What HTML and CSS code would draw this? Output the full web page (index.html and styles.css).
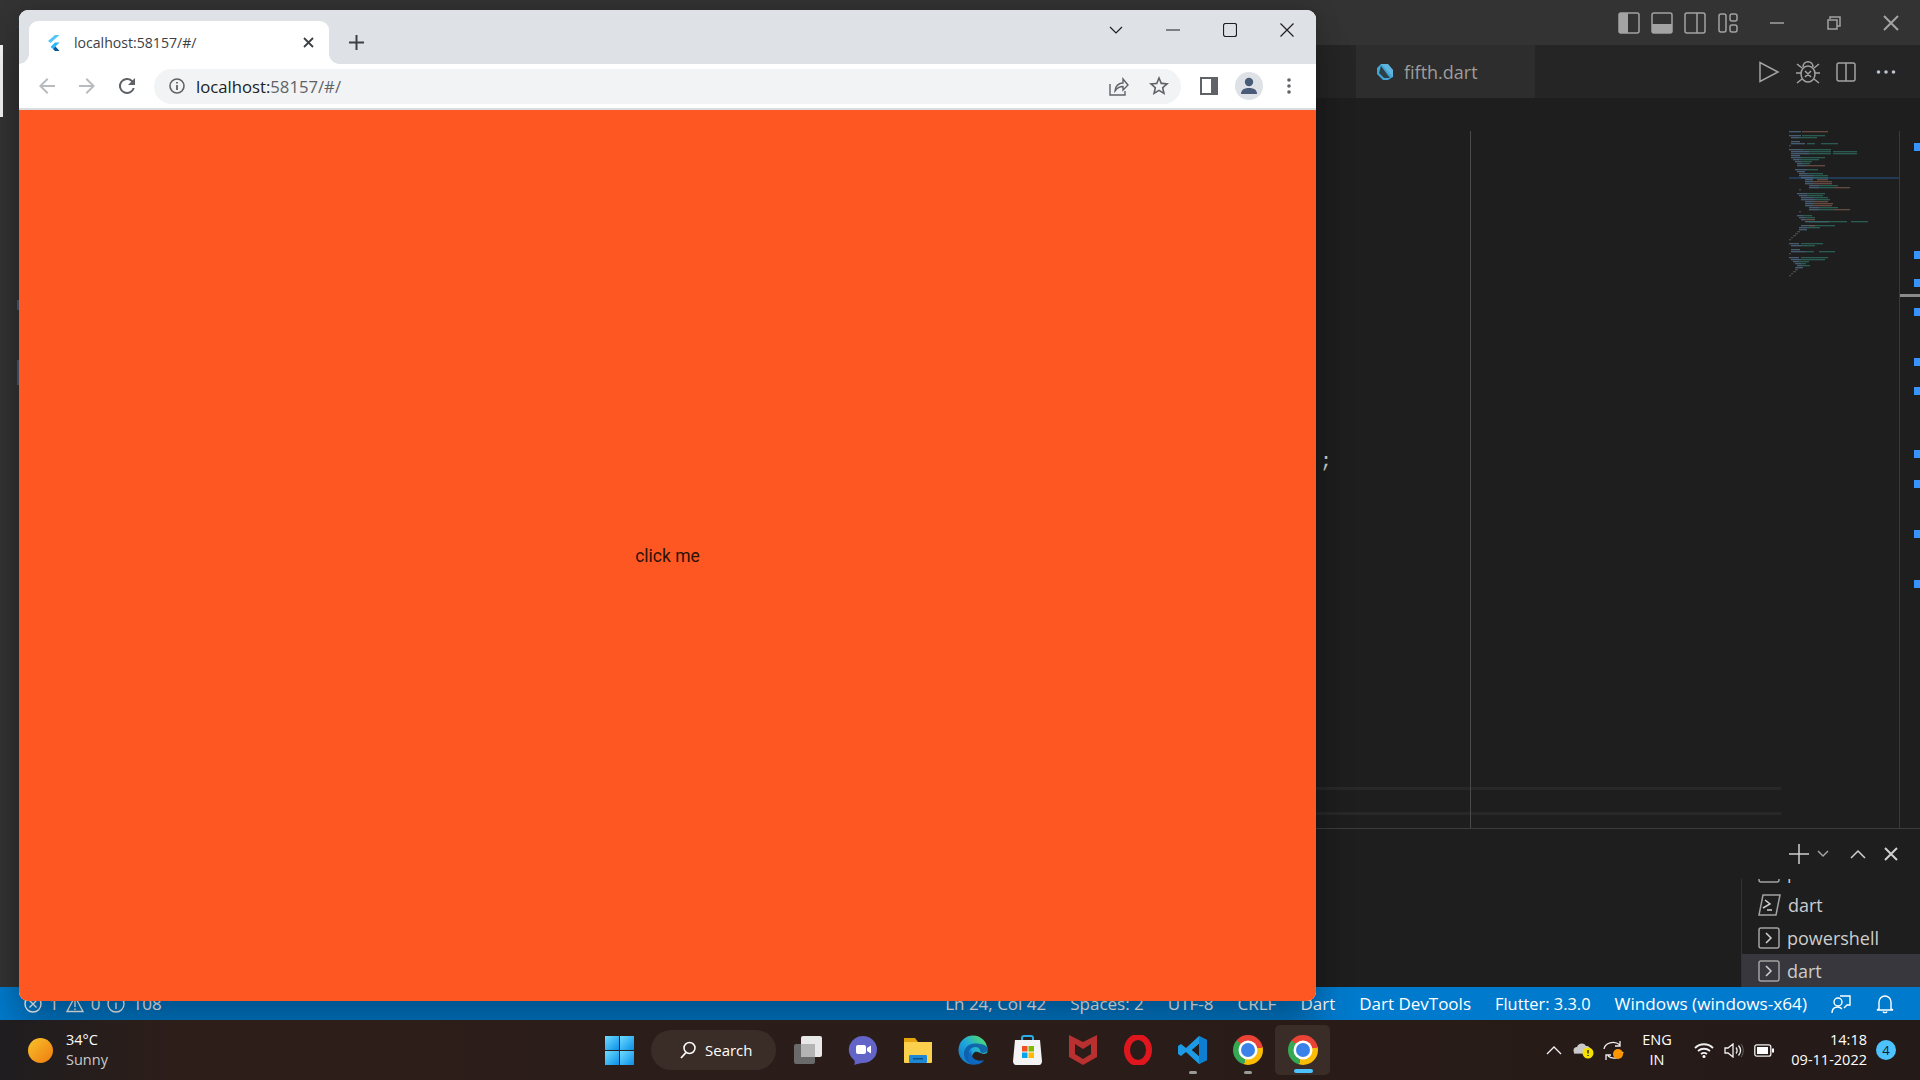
FILE: index.html
```html
<!DOCTYPE html>
<html>
<head>
    <title>localhost:58157/#/</title>
    <link rel="stylesheet" href="styles.css">
</head>
<body>
<div class="desktop">

    <!-- vs code behind the browser -->
    <div class="vscode">
        <div class="titlebar">
            <svg class="app-logo" width="20" height="14" viewBox="0 0 20 14"><path d="M15 0l5 3-5 3-5-3zM15 8l5 3-5 3-5-3z" fill="#1c78b8"/></svg>
            <svg class="ti" width="22" height="22" viewBox="0 0 22 22"><rect x="1" y="1" width="20" height="20" rx="2" class="line"/><rect x="1" y="1" width="9" height="20" class="fill"/></svg>
            <svg class="ti" width="22" height="22" viewBox="0 0 22 22"><rect x="1" y="1" width="20" height="20" rx="2" class="line"/><rect x="1" y="12" width="20" height="9" class="fill"/></svg>
            <svg class="ti" width="22" height="22" viewBox="0 0 22 22"><rect x="1" y="1" width="20" height="20" rx="2" class="line"/><path d="M13 1v20" class="line"/></svg>
            <svg class="ti" width="22" height="22" viewBox="0 0 22 22"><rect x="2" y="2" width="7" height="18" rx="2" class="line"/><rect x="13" y="2" width="7" height="7" rx="2" class="line"/><rect x="13" y="13" width="7" height="7" rx="2" class="line"/></svg>
            <div class="win-btns">
                <svg width="16" height="16" viewBox="0 0 16 16"><path d="M1 8h14" class="line"/></svg>
                <svg width="16" height="16" viewBox="0 0 16 16"><path d="M4 4V2h10v9h-3M2 5h9v9H2z" class="line"/></svg>
                <svg width="16" height="16" viewBox="0 0 16 16"><path d="M1 1l14 14M15 1L1 15" class="line thick"/></svg>
            </div>
        </div>

        <div class="workbench">
            <div class="activity">
                <div class="activity-active"></div>
                <div class="activity-bit activity-bit-a"></div>
                <div class="activity-bit activity-bit-b"></div>
            </div>

            <div class="main">
                <div class="tabbar">
                    <div class="file-tab">
                        <svg width="18" height="18" viewBox="0 0 18 18"><path d="M5 1h7l5 6v7l-5 3H7l-6-6V5z" fill="#40a6d8"/><path d="M5 1h7l5 6v7z" fill="#7fc4e6" opacity=".5"/><path d="M5 3l9 12H8L3 10z" fill="#2d2d2d" opacity=".85"/></svg>
                        <span>fifth.dart</span>
                    </div>
                    <div class="editor-actions">
                        <svg width="22" height="22" viewBox="0 0 22 22"><path d="M2 1.500v19L20 11z" class="line"/></svg>
                        <svg width="26" height="24" viewBox="0 0 26 24"><ellipse cx="13" cy="14" rx="7" ry="8" class="line"/><path d="M8 7c0-7 10-7 10 0M1 13h5M20 13h5M2 4l5 4M24 4l-5 4M2 23l5-4M24 23l-5-4M10 11l6 6M16 11l-6 6" class="line"/></svg>
                        <svg width="20" height="20" viewBox="0 0 20 20"><rect x="1" y="1" width="18" height="18" rx="2" class="line"/><path d="M10 1v18" class="line"/></svg>
                        <svg class="more-dots" width="20" height="6" viewBox="0 0 20 6"><circle cx="2.500" cy="3" r="1.800" fill="#b9c4cf"/><circle cx="10" cy="3" r="1.800" fill="#b9c4cf"/><circle cx="17.500" cy="3" r="1.800" fill="#b9c4cf"/></svg>
                    </div>
                </div>

                <div class="editor">
                    <div class="code">
                        <div class="code-guide"></div>
                        <div class="code-line">;</div>
                        <div class="code-rule code-rule-a"></div>
                        <div class="code-rule code-rule-b"></div>
                    </div>
                    <svg class="minimap" width="110" height="146" viewBox="0 0 110 146">
                        <rect x="0" y="46" width="110" height="2" fill="#223a55"/>
                        <path class="mm-blue" d="M0 .750h12M0 4.750h12M2 6.750h8M2 10.750h9M2 12.750h14M0 18.750h14M2 20.750h18M2 22.750h18M2 24.750h9M2 26.750h10M4 28.750h6M6 30.750h6M8 32.750h5M8 34.750h8M6 38.750h12M8 40.750h8M10 42.750h8M10 44.750h14M12 46.750h12M16 48.750h8M16 50.750h8M16 52.750h8M20 54.750h10M20 56.750h10M8 62.750h10M10 64.750h8M12 66.750h12M12 68.750h14M16 70.750h8M16 72.750h8M16 74.750h8M20 76.750h10M20 78.750h10M8 84.750h6M10 86.750h6M12 88.750h4M16 90.750h24M12 94.750h8M10 96.750h8M10 98.750h8M0 112.750h10M2 114.750h10M2 118.750h9M2 120.750h14M0 126.750h10M2 128.750h10M4 130.750h6M6 132.750h6M8 134.750h5M6 136.750h8"/>
                        <path class="mm-teal" d="M13 4.750h23M10 6.750h18M18 12.750h8M32 12.750h17M14 18.750h28M20 20.750h22M44 20.750h24M20 22.750h22M44 22.750h24M12 26.750h24M10 28.750h20M12 30.750h11M13 32.750h8M18 38.750h11M18 42.750h16M24 44.750h15M24 46.750h15M30 54.750h19M30 56.750h15M18 62.750h18M18 64.750h16M24 66.750h15M26 68.750h15M30 76.750h19M30 78.750h15M14 84.750h9M16 86.750h10M20 90.750h38M62 90.750h17M20 94.750h26M18 96.750h13M12 112.750h22M12 114.750h14M16 120.750h9M30 120.750h16M12 126.750h27M12 128.750h24M10 130.750h10M12 132.750h5M13 134.750h8"/>
                        <path class="mm-brown" d="M13 .750h26M16 34.750h20M28 48.750h11M24 50.750h19M24 52.750h19M45 56.750h16M24 70.750h15M24 72.750h20M24 74.750h19M45 78.750h16M16 88.750h10M20 94.750h6"/>
                        <path class="mm-dim" d="M0 14.750h2M10 58.750h2M10 80.750h2M8 100.750h3M6 102.750h3M4 104.750h3M2 106.750h2M0 108.750h2M0 122.750h2M6 138.750h3M4 140.750h3M2 142.750h2M0 144.750h2"/>
                    </svg>
                    <svg class="overview" width="21" height="697" viewBox="0 0 21 697">
                        <rect x="0" y="0" width="1" height="697" fill="#3a3a3a"/>
                        <rect x="15" y="12" width="6" height="8" fill="#3794ff"/>
                        <rect x="15" y="120" width="6" height="8" fill="#3794ff"/>
                        <rect x="15" y="148" width="6" height="8" fill="#3794ff"/>
                        <rect x="1" y="163" width="20" height="3" fill="#8a8a8a"/>
                        <rect x="15" y="177" width="6" height="8" fill="#3794ff"/>
                        <rect x="15" y="227" width="6" height="8" fill="#3794ff"/>
                        <rect x="15" y="256" width="6" height="8" fill="#3794ff"/>
                        <rect x="15" y="319" width="6" height="8" fill="#3794ff"/>
                        <rect x="15" y="349" width="6" height="8" fill="#3794ff"/>
                        <rect x="15" y="399" width="6" height="8" fill="#3794ff"/>
                        <rect x="15" y="449" width="6" height="8" fill="#3794ff"/>
                    </svg>
                </div>

                <div class="panel">
                    <div class="panel-actions">
                        <svg width="22" height="22" viewBox="0 0 22 22"><path d="M11 1v20M1 11h20" class="line light"/></svg>
                        <svg class="panel-chevron" width="12" height="8" viewBox="0 0 12 8"><path d="M1 1l5 5 5-5" class="line"/></svg>
                        <svg class="panel-up" width="16" height="10" viewBox="0 0 16 10"><path d="M1 9l7-7 7 7" class="line light"/></svg>
                        <svg class="panel-close" width="14" height="14" viewBox="0 0 14 14"><path d="M1 1l12 12M13 1L1 13" class="line light thick"/></svg>
                    </div>
                    <div class="terminal-list">
                        <div class="terminal-row">
                            <svg width="22" height="22" viewBox="0 0 22 22"><rect x="1" y="1" width="20" height="20" rx="2" class="line"/></svg>
                            <span>powershell</span>
                        </div>
                        <div class="terminal-row">
                            <svg width="23" height="22" viewBox="0 0 23 22"><path d="M5 1h17l-4 20H1z" class="line"/><path d="M7 6l5 4-7 4M9 16h5" class="line light"/></svg>
                            <span>dart</span>
                        </div>
                        <div class="terminal-row">
                            <svg width="22" height="22" viewBox="0 0 22 22"><rect x="1" y="1" width="20" height="20" rx="2" class="line"/><path d="M8 6l5 5-5 5" class="line light"/></svg>
                            <span>powershell</span>
                        </div>
                        <div class="terminal-row selected">
                            <svg width="22" height="22" viewBox="0 0 22 22"><rect x="1" y="1" width="20" height="20" rx="2" class="line"/><path d="M8 6l5 5-5 5" class="line light"/></svg>
                            <span>dart</span>
                        </div>
                    </div>
                </div>
            </div>
        </div>

        <div class="statusbar">
            <div class="status-left">
                <svg width="18" height="18" viewBox="0 0 18 18"><circle cx="9" cy="9" r="8" class="sline"/><path d="M5.500 5.500l7 7M12.500 5.500l-7 7" class="sline"/></svg>
                <span>1</span>
                <svg width="18" height="18" viewBox="0 0 18 18"><path d="M9 1.500l8 15H1zM9 6v6M9 13.500v1.500" class="sline"/></svg>
                <span>0</span>
                <svg width="18" height="18" viewBox="0 0 18 18"><circle cx="9" cy="9" r="8" class="sline"/><path d="M9 4v1.500M9 7.500V14" class="sline"/></svg>
                <span>108</span>
            </div>
            <div class="status-right">
                <span>Ln 24, Col 42</span>
                <span>Spaces: 2</span>
                <span>UTF-8</span>
                <span>CRLF</span>
                <span>Dart</span>
                <span>Dart DevTools</span>
                <span class="status-flutter">Flutter: 3.3.0</span>
                <span class="status-device">Windows (windows-x64)</span>
                <svg width="20" height="20" viewBox="0 0 20 20"><circle cx="7" cy="8" r="4" class="sline"/><path d="M1 19c0-4 2-6 6-6 2 0 3 1 4 2M9 2h10v9h-3l-3 3" class="sline"/></svg>
                <svg width="20" height="20" viewBox="0 0 20 20"><path d="M4 15V8a6 6 0 0 1 12 0v7l2 1H2zM8 17.500c.5 1.500 3.500 1.500 4 0" class="sline"/></svg>
            </div>
        </div>
    </div>

    <!-- windows taskbar -->
    <div class="taskbar">
        <div class="weather">
            <div class="sun"></div>
            <div class="weather-text">
                <div>34°C</div>
                <div class="weather-sub">Sunny</div>
            </div>
        </div>
        <svg class="start" width="29" height="29" viewBox="0 0 29 29">
            <defs><linearGradient id="winblue" x1="0" y1="0" x2="1" y2="1"><stop offset="0" stop-color="#6fdcff"/><stop offset="1" stop-color="#0a8fe8"/></linearGradient></defs>
            <rect width="14" height="14" fill="url(#winblue)"/><rect x="15" width="14" height="14" fill="url(#winblue)"/><rect y="15" width="14" height="14" fill="url(#winblue)"/><rect x="15" y="15" width="14" height="14" fill="url(#winblue)"/>
        </svg>
        <div class="search-pill">
            <svg width="18" height="18" viewBox="0 0 18 18"><circle cx="10.500" cy="7" r="5.500" fill="none" stroke="#fff" stroke-width="1.500"/><path d="M7 11.500L2 17" stroke="#fff" stroke-width="1.800"/></svg>
            <span>Search</span>
        </div>
        <div class="task-items">
            <div class="task-item">
                <svg width="30" height="30" viewBox="0 0 30 30"><rect x="1" y="9" width="21" height="20" rx="2" fill="#6a6a6a"/><rect x="8" y="1" width="21" height="21" rx="2" fill="#e8e8e8"/><rect x="8" y="9" width="14" height="13" fill="#b4b4b4"/></svg>
            </div>
            <div class="task-item">
                <svg width="30" height="30" viewBox="0 0 30 30"><path d="M15 1a14 13.500 0 0 1 0 27c-3 0-6 1-9 2 1-2 1-4 0-5A14 13.500 0 0 1 15 1z" fill="#6264c8"/><rect x="8" y="10" width="10" height="9" rx="2" fill="#fff"/><path d="M19 13l4-2.500v8L19 16z" fill="#fff"/></svg>
            </div>
            <div class="task-item">
                <svg width="30" height="30" viewBox="0 0 30 30"><path d="M1 3h11l3 4h14v6H1z" fill="#e5a50f"/><rect x="1" y="7" width="28" height="21" rx="1" fill="#fbd04d"/><rect x="6" y="20" width="18" height="8" rx="1" fill="#1e88d4"/><rect x="10" y="23" width="10" height="1.500" fill="#0c4f85"/></svg>
            </div>
            <div class="task-item">
                <svg width="30" height="30" viewBox="0 0 30 30">
                    <defs><linearGradient id="edgeg" x1="0" y1="1" x2="1" y2="0"><stop offset="0" stop-color="#0f6fc6"/><stop offset=".5" stop-color="#1fa8dc"/><stop offset=".8" stop-color="#43d08a"/><stop offset="1" stop-color="#8ae05a"/></linearGradient></defs>
                    <circle cx="15" cy="15" r="14.500" fill="url(#edgeg)"/>
                    <path d="M30 14c0 3-3 4-5 4-2 0-3-1-3-3-1-3-5-4-8-2-3 2-4 6-1 10 2 3 7 6 13 3-3 3-7 4-11 3.500-5-1-9-5-9-11 0-6 5-10 11-10 7 0 13 2 13 6z" fill="#0c58a8" opacity=".85"/>
                    <path d="M17 17c3-1 5 2 9 2 1 0 3-1 4-2-1 6-4 9-7 10-4 1-9-1-9-5 0-2 1-4 3-5z" fill="#2a1c18"/>
                    <path d="M14 21c1 3 6 6 12 4-3 4-8 5-13 3-2-1-3-3-3-5 0-2 1-6 4-8-1 2-1 4 0 6z" fill="#0f67bf"/>
                </svg>
            </div>
            <div class="task-item">
                <svg width="29" height="30" viewBox="0 0 29 30"><path d="M9 6V3c0-2 1-2 2-2h7c1 0 2 0 2 2v3" fill="none" stroke="#29aee6" stroke-width="2"/><path d="M2 5h25l2 21c0 2-1 4-3 4H3c-2 0-3-2-3-4z" fill="#f4f4f4"/><rect x="9" y="11" width="5.500" height="5.500" fill="#f05022"/><rect x="15.500" y="11" width="5.500" height="5.500" fill="#7fba00"/><rect x="9" y="17.500" width="5.500" height="5.500" fill="#00a4ef"/><rect x="15.500" y="17.500" width="5.500" height="5.500" fill="#ffb900"/></svg>
            </div>
            <div class="task-item">
                <svg width="28" height="30" viewBox="0 0 28 30"><path d="M0 0l14 7 14-7v22l-14 8-14-8z" fill="#b93030"/><path d="M6 9l8 5 8-5v10l-8 5-8-5z" fill="#2a1c18"/></svg>
            </div>
            <div class="task-item">
                <svg width="30" height="30" viewBox="0 0 30 30"><ellipse cx="15" cy="15" rx="11" ry="13" fill="none" stroke="#e0161f" stroke-width="6"/></svg>
            </div>
            <div class="task-item is-open">
                <svg width="30" height="30" viewBox="0 0 30 30"><path d="M21 1l8 4v20l-8 4-13-12-5 4-3-2V11l3-2 5 4zM21 9l-7 6 7 6z" fill="#1c9ae6"/><path d="M21 1l8 4v20l-8 4z" fill="#0e7fd0"/><path d="M21 9l-7 6 7 6z" fill="#241c1c"/></svg>
            </div>
            <div class="task-item is-open">
                <div class="chrome-logo"></div>
            </div>
            <div class="task-item is-active">
                <div class="chrome-logo"></div>
            </div>
        </div>
        <div class="tray">
            <svg class="tray-chevron" width="16" height="9" viewBox="0 0 16 9"><path d="M1 8l7-7 7 7" class="tline"/></svg>
            <svg class="tray-cloud" width="21" height="18" viewBox="0 0 21 18"><path d="M4 13a3.500 3.500 0 0 1 0-7c1-4 7-5 9-1 3 0 5 2 5 5v3z" fill="#c9c9c9"/><path d="M1 12h17v1H1z" fill="#8a8a8a"/><circle cx="15" cy="12" r="5.500" fill="#f5e000"/><path d="M15 9v3.500M15 14v1" stroke="#222" stroke-width="1.400"/></svg>
            <svg class="tray-sync" width="21" height="21" viewBox="0 0 21 21"><path d="M1 9C2 3 11 0 17 5M20 12c-2 6-10 8-15 4M17 1v5h-5M3 20v-5h5" class="tline"/><circle cx="15" cy="14" r="5" fill="#ff9500"/></svg>
            <div class="tray-lang">
                <div>ENG</div>
                <div>IN</div>
            </div>
            <svg class="tray-wifi" width="20" height="15" viewBox="0 0 20 15"><path d="M1 5c5-5 13-5 18 0M4 8c3.500-3 8.500-3 12 0M7 11c2-1.500 4-1.500 6 0" class="tline wide"/><circle cx="10" cy="13.500" r="1.500" fill="#fff"/></svg>
            <svg class="tray-sound" width="20" height="15" viewBox="0 0 20 15"><path d="M1 5h3l5-4v13l-5-4H1zM12 4.500c1.500 2 1.500 4 0 6M14.500 2.500c2.500 3 2.500 7 0 10" class="tline"/><path d="M17 1c3 3.500 3 9.500 0 13" fill="none" stroke="#666"/></svg>
            <svg class="tray-battery" width="20" height="13" viewBox="0 0 20 13"><rect x=".8" y=".8" width="16" height="11.400" rx="2" class="tline"/><rect x="3" y="3" width="11" height="7" fill="#fff"/><rect x="18" y="4.500" width="2" height="4" fill="#fff"/></svg>
            <div class="tray-clock">
                <div>14:18</div>
                <div>09-11-2022</div>
            </div>
            <div class="notify-badge">4</div>
        </div>
    </div>

    <!-- browser window on top -->
    <div class="browser">
        <div class="tabstrip">
            <div class="tab">
                <svg class="favicon" width="13" height="16" viewBox="0 0 13 16"><path d="M8 0h4.500L3.500 8 1 6z" fill="#54c5f8"/><path d="M12.500 7.500H8L3.500 12 6 14z" fill="#29b6f6"/><path d="M6 14l2 2h4.500L8.500 11.500z" fill="#01579b"/></svg>
                <span class="tab-title">localhost:58157/#/</span>
                <svg class="tab-close" width="11" height="11" viewBox="0 0 11 11"><path d="M1 1l9 9M10 1l-9 9" stroke="#3c4043" stroke-width="1.800"/></svg>
            </div>
            <svg class="new-tab" width="15" height="15" viewBox="0 0 15 15"><path d="M7.500 0v15M0 7.500h15" stroke="#3c4043" stroke-width="2"/></svg>
            <div class="chrome-controls">
                <svg width="14" height="8" viewBox="0 0 14 8"><path d="M1 1l6 6 6-6" class="wline"/></svg>
                <svg width="14" height="2" viewBox="0 0 14 2"><path d="M0 1h14" class="wline"/></svg>
                <svg width="14" height="14" viewBox="0 0 14 14"><rect x=".5" y=".5" width="13" height="13" rx="2" class="wline"/></svg>
                <svg width="14" height="14" viewBox="0 0 14 14"><path d="M.5.500l13 13M13.500.500l-13 13" class="wline"/></svg>
            </div>
        </div>
        <div class="toolbar">
            <svg class="nav-icon" width="24" height="24" viewBox="0 0 24 24"><path d="M20 11H7.800l5.600-5.600L12 4l-8 8 8 8 1.400-1.400L7.800 13H20z" fill="#b9bcbf"/></svg>
            <svg class="nav-icon" width="24" height="24" viewBox="0 0 24 24"><path d="M4 13h12.200l-5.600 5.600L12 20l8-8-8-8-1.400 1.400L16.200 11H4z" fill="#b9bcbf"/></svg>
            <svg class="nav-icon" width="24" height="24" viewBox="0 0 24 24"><path d="M17.650 6.350A8 8 0 1 0 19.730 14h-2.080A6 6 0 1 1 12 6c1.660 0 3.140.690 4.220 1.780L13 11h7V4z" fill="#5f6368"/></svg>
            <div class="omnibox">
                <svg width="16" height="16" viewBox="0 0 16 16"><circle cx="8" cy="8" r="7" fill="none" stroke="#5f6368" stroke-width="1.600"/><path d="M8 7v5M8 4v1.600" stroke="#5f6368" stroke-width="1.800"/></svg>
                <span class="url"><span class="url-host">localhost:</span>58157/#/</span>
                <svg class="omni-share" width="20" height="19" viewBox="0 0 20 19"><path d="M1 7v11h15v-4M6 14c0-5 4-8 8-8V2l5 6-5 5V9.500c-4 0-6 1.500-8 4.500z" fill="none" stroke="#5f6368" stroke-width="1.400"/></svg>
                <svg class="omni-star" width="24" height="24" viewBox="0 0 24 24"><path d="M22 9.240l-7.190-.62L12 2 9.190 8.630 2 9.240l5.460 4.730L5.820 21 12 17.270 18.180 21l-1.630-7.030L22 9.240zM12 15.400l-3.760 2.270 1-4.280-3.320-2.880 4.380-.38L12 6.100l1.710 4.040 4.380.38-3.320 2.880 1 4.280L12 15.400z" fill="#5f6368"/></svg>
            </div>
            <svg class="side-panel" width="18" height="18" viewBox="0 0 18 18"><rect width="18" height="18" fill="#5f6368"/><rect x="2" y="2" width="9" height="14" fill="#fff"/></svg>
            <div class="avatar">
                <svg width="18" height="18" viewBox="0 0 18 18"><circle cx="9" cy="5" r="4.200" fill="#4a5b78"/><path d="M1 17c0-4 3-6 8-6s8 2 8 6z" fill="#4a5b78"/></svg>
            </div>
            <svg class="menu-dots" width="4" height="16" viewBox="0 0 4 16"><circle cx="2" cy="2" r="1.800" fill="#5f6368"/><circle cx="2" cy="8" r="1.800" fill="#5f6368"/><circle cx="2" cy="14" r="1.800" fill="#5f6368"/></svg>
        </div>
        <div class="app-view">
            <span class="click-me">click me</span>
        </div>
    </div>

</div>
</body>
</html>
```

FILE: styles.css
```css
* {
    box-sizing: border-box;
}

body {
    margin: 0;
    overflow: hidden;
    font-family: "Open Sans", "Noto Sans", sans-serif;
}

svg {
    display: block;
    flex: none;
}

.desktop {
    position: relative;
    width: 1920px;
    height: 1080px;
    display: flex;
    flex-direction: column;
    background: #1e1e1e;
}

/* shared svg strokes */
.line {
    fill: none;
    stroke: #a3a3a3;
    stroke-width: 1.5;
}

.line.light {
    stroke: #d0d0d0;
}

.line.thick {
    stroke-width: 2;
}

.fill {
    fill: #a3a3a3;
}

.sline {
    fill: none;
    stroke: #fff;
    stroke-width: 1.4;
}

.tline {
    fill: none;
    stroke: #f0f0f0;
    stroke-width: 1.3;
}

.tline.wide {
    stroke-width: 1.8;
}

.wline {
    fill: none;
    stroke: #1f1f1f;
    stroke-width: 1.2;
}

/* vs code */
.vscode {
    height: 1020px;
    display: flex;
    flex-direction: column;
    background: #333;
}

.titlebar {
    height: 45px;
    flex: none;
    display: flex;
    align-items: center;
    justify-content: flex-end;
    background: #333;
}

.app-logo {
    margin-right: auto;
    margin-left: 8px;
}

.titlebar .ti {
    margin-right: 11px;
}

.win-btns {
    display: flex;
    align-items: center;
    gap: 41px;
    margin-left: 19px;
    margin-right: 21px;
}

.workbench {
    flex: 1;
    min-height: 0;
    display: flex;
}

.activity {
    width: 48px;
    flex: none;
    background: #333;
}

.activity-active {
    width: 3px;
    height: 72px;
    background: #f5f5f5;
}

.activity-bit {
    width: 2px;
    margin-left: 17px;
    background: #4a5a78;
}

.activity-bit-a {
    height: 10px;
    margin-top: 183px;
}

.activity-bit-b {
    height: 25px;
    margin-top: 50px;
}

.main {
    flex: 1;
    min-width: 0;
    display: flex;
    flex-direction: column;
}

.tabbar {
    height: 53px;
    flex: none;
    display: flex;
    align-items: center;
    background: #252526;
    color: #9d9d9d;
}

.file-tab {
    width: 180px;
    height: 100%;
    margin-left: 1307px;
    padding-left: 20px;
    display: flex;
    align-items: center;
    gap: 10px;
    background: #2d2d2d;
    border-left: 1px solid #252526;
    font-size: 18px;
}

.editor-actions {
    display: flex;
    align-items: center;
    margin-left: 223px;
    gap: 15px;
}

.more-dots {
    margin-left: 5px;
}

.editor {
    flex: 1;
    min-height: 0;
    display: flex;
    background: #1e1e1e;
}

.code {
    position: relative;
    flex: 1;
    display: flex;
    flex-direction: column;
    padding-top: 352px;
    padding-left: 1272px;
}

.code-guide {
    position: absolute;
    left: 1422px;
    top: 33px;
    bottom: 0;
    width: 1px;
    background: #4a4a4a;
}

.code-line {
    height: 24px;
    line-height: 24px;
    font-family: "Liberation Mono", monospace;
    font-size: 20px;
    color: #d4d4d4;
}

.code-rule {
    height: 3px;
    margin-left: -4px;
    margin-right: 8px;
    background: #282828;
}

.code-rule-a {
    margin-top: 313px;
}

.code-rule-b {
    margin-top: 22px;
}

.minimap {
    margin-top: 33px;
}

.minimap path {
    fill: none;
    stroke-width: 1;
}

.mm-blue {
    stroke: #54728c;
}

.mm-teal {
    stroke: #2f6f62;
}

.mm-brown {
    stroke: #7d5a4c;
}

.mm-dim {
    stroke: #555;
}

.overview {
    margin-top: 33px;
}

.panel {
    height: 159px;
    flex: none;
    display: flex;
    flex-direction: column;
    background: #1e1e1e;
    border-top: 1px solid #3c3c3c;
}

.panel-actions {
    height: 50px;
    flex: none;
    display: flex;
    align-items: center;
    justify-content: flex-end;
    padding-right: 22px;
}

.panel-chevron {
    margin-left: 7px;
}

.panel-up {
    margin-left: 21px;
}

.panel-close {
    margin-left: 18px;
}

.terminal-list {
    flex: 1;
    min-height: 0;
    width: 179px;
    margin-left: auto;
    overflow: hidden;
    display: flex;
    flex-direction: column;
    justify-content: flex-end;
    border-left: 1px solid #333;
    color: #cccccc;
    font-size: 18px;
}

.terminal-row {
    height: 33px;
    flex: none;
    display: flex;
    align-items: center;
    gap: 7px;
    padding-left: 16px;
}

.terminal-row.selected {
    background: #37373d;
}

.statusbar {
    height: 33px;
    flex: none;
    display: flex;
    align-items: center;
    justify-content: space-between;
    background: #007acc;
    color: #fff;
    font-size: 17px;
}

.status-left,
.status-right {
    display: flex;
    align-items: center;
}

.status-left {
    padding-left: 24px;
    gap: 7px;
}

.status-right {
    gap: 24px;
    padding-right: 25px;
}

.status-flutter {
    font-size: 16.4px;
}

.status-device {
    font-size: 17.2px;
}

/* browser window */
.browser {
    position: absolute;
    left: 19px;
    top: 10px;
    width: 1297px;
    height: 991px;
    display: flex;
    flex-direction: column;
    border-radius: 9px;
    overflow: hidden;
    z-index: 1;
    background: #fff;
    box-shadow: 0 32px 38px rgba(0, 0, 0, 0.24), 0 0 26px rgba(0, 0, 0, 0.16);
}

.tabstrip {
    height: 54px;
    flex: none;
    display: flex;
    align-items: flex-end;
    padding-left: 10px;
    background: #dee1e6;
}

.tab {
    position: relative;
    width: 300px;
    height: 43px;
    display: flex;
    align-items: center;
    padding-left: 18px;
    background: #fff;
    border-radius: 9px 9px 0 0;
}

.tab::before,
.tab::after {
    content: "";
    position: absolute;
    bottom: 0;
    width: 10px;
    height: 10px;
}

.tab::before {
    left: -10px;
    background: radial-gradient(circle at 0 0, transparent 9.5px, #fff 10px);
}

.tab::after {
    right: -10px;
    background: radial-gradient(circle at 100% 0, transparent 9.5px, #fff 10px);
}

.favicon {
    margin-right: 14px;
}

.tab-title {
    flex: 1;
    font-size: 14.1px;
    color: #3c4043;
}

.tab-close {
    margin-right: 15px;
}

.new-tab {
    margin-left: 20px;
    margin-bottom: 14px;
}

.chrome-controls {
    display: flex;
    align-items: center;
    gap: 43px;
    height: 28px;
    margin-left: auto;
    margin-right: 22px;
    margin-bottom: 20px;
}

.toolbar {
    height: 46px;
    flex: none;
    display: flex;
    align-items: center;
    padding-left: 16px;
    background: #fff;
    border-bottom: 2px solid #dadce0;
}

.nav-icon {
    margin-right: 16px;
}

.omnibox {
    width: 1027px;
    height: 35px;
    margin-left: -1px;
    padding-left: 15px;
    display: flex;
    align-items: center;
    border-radius: 18px;
    background: #f1f3f4;
}

.url {
    margin-left: 11px;
    flex: 1;
    font-size: 16.7px;
    color: #5f6368;
}

.url-host {
    color: #202124;
}

.omni-star {
    margin-left: 18px;
    margin-right: 10px;
}

.side-panel {
    margin-left: 19px;
}

.avatar {
    width: 28px;
    height: 28px;
    margin-left: 17px;
    display: flex;
    align-items: center;
    justify-content: center;
    border-radius: 50%;
    background: #dee1e6;
}

.menu-dots {
    margin-left: 24px;
}

.app-view {
    flex: 1;
    display: flex;
    align-items: center;
    justify-content: center;
    background: #ff5722;
}

.click-me {
    font-family: Roboto, sans-serif;
    font-size: 17.5px;
    color: #2a1209;
}

/* taskbar */
.taskbar {
    position: relative;
    z-index: 2;
    height: 60px;
    flex: none;
    display: flex;
    align-items: center;
    color: #fff;
    background: linear-gradient(90deg, #1f1d1f 0%, #2e1e19 10%, #2b1d19 30%, #2a1c18 60%, #241a18 100%);
}

.weather {
    width: 605px;
    padding-left: 28px;
    display: flex;
    align-items: center;
    gap: 13px;
    font-size: 14.5px;
    line-height: 20px;
}

.sun {
    width: 25px;
    height: 25px;
    border-radius: 50%;
    background: linear-gradient(135deg, #f9c32a, #ee7a10);
}

.weather-sub {
    color: #c9c9c9;
}

.search-pill {
    width: 125px;
    height: 40px;
    margin-left: 17px;
    display: flex;
    align-items: center;
    gap: 8px;
    padding-left: 28px;
    border-radius: 20px;
    background: #3a2d28;
    font-size: 15px;
}

.task-items {
    display: flex;
    margin-left: 4px;
}

.task-item {
    position: relative;
    width: 55px;
    height: 50px;
    display: flex;
    align-items: center;
    justify-content: center;
    border-radius: 5px;
}

.task-item.is-active {
    background: #3a2d28;
}

.is-open::after,
.is-active::after {
    content: "";
    position: absolute;
    left: 50%;
    bottom: 1px;
    width: 8px;
    height: 3px;
    margin-left: -4px;
    border-radius: 2px;
    background: #9a9a9a;
}

.is-active::after {
    width: 19px;
    height: 4px;
    bottom: 2px;
    margin-left: -9px;
    background: #4cc2ff;
}

.chrome-logo {
    position: relative;
    width: 30px;
    height: 30px;
    border-radius: 50%;
    background: conic-gradient(from -50deg, #ea4335 0 130deg, #fbbc04 130deg 245deg, #34a853 245deg 360deg);
}

.chrome-logo::after {
    content: "";
    position: absolute;
    left: 8px;
    top: 8px;
    width: 14px;
    height: 14px;
    border-radius: 50%;
    background: #3b82e8;
    border: 0;
    box-shadow: 0 0 0 2.5px #fff;
}

.tray {
    display: flex;
    align-items: center;
    margin-left: 216px;
    font-size: 14.5px;
    line-height: 20px;
}

.tray-cloud {
    margin-left: 11px;
}

.tray-sync {
    margin-left: 9px;
}

.tray-lang {
    width: 40px;
    margin-left: 13px;
    text-align: center;
}

.tray-wifi {
    margin-left: 17px;
}

.tray-sound {
    margin-left: 10px;
}

.tray-battery {
    margin-left: 10px;
}

.tray-clock {
    width: 93px;
    text-align: right;
}

.notify-badge {
    width: 20px;
    height: 20px;
    margin-left: 9px;
    border-radius: 50%;
    background: #4cc2ff;
    color: #10212c;
    text-align: center;
    font-size: 13px;
}
```
